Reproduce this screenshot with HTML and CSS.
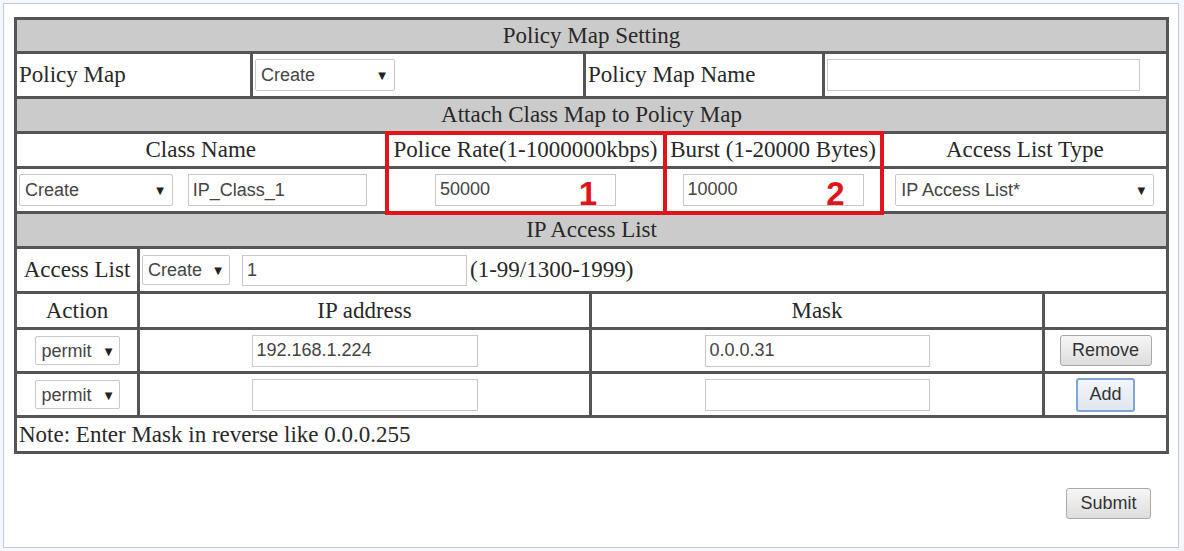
FILE: index.html
```html
<!DOCTYPE html>
<html lang="en">
<head>
<meta charset="utf-8">
<title>Policy Map Setting</title>
<link rel="stylesheet" href="styles.css">
</head>
<body>
<div class="frame">
  <table class="policy">
    <colgroup>
      <col class="c1"><col class="c2"><col class="c3"><col class="c4"><col class="c5">
      <col class="c6"><col class="c7"><col class="c8"><col class="c9"><col class="c10">
    </colgroup>
    <tr class="band band-first"><td colspan="10">Policy Map Setting</td></tr>
    <tr class="inrow">
      <td colspan="2" class="lbl">Policy Map</td>
      <td colspan="2" class="pad7"><span class="sel sel-pm"><select><option>Create</option></select></span></td>
      <td colspan="3" class="lbl">Policy Map Name</td>
      <td colspan="3" class="pad7"><input class="txt in-pmname" type="text"></td>
    </tr>
    <tr class="band"><td colspan="10">Attach Class Map to Policy Map</td></tr>
    <tr class="head head-a">
      <td colspan="3">Class Name</td>
      <td colspan="3" class="mark mark-top">Police Rate(1-1000000kbps)</td>
      <td colspan="2" class="mark mark-top">Burst (1-20000 Bytes)</td>
      <td colspan="2">Access List Type</td>
    </tr>
    <tr class="inrow">
      <td colspan="3" class="classcell">
        <span class="sel sel-class"><select><option>Create</option></select></span>
        <input class="txt in-class" type="text" value="IP_Class_1">
      </td>
      <td colspan="3" class="mark mark-bot ctr">
        <span class="numwrap"><input class="txt in-rate" type="text" value="50000"><span class="num">1</span></span>
      </td>
      <td colspan="2" class="mark mark-bot ctr">
        <span class="numwrap"><input class="txt in-burst" type="text" value="10000"><span class="num">2</span></span>
      </td>
      <td colspan="2" class="ctr">
        <span class="sel sel-type"><select><option>IP Access List*</option></select></span>
      </td>
    </tr>
    <tr class="band"><td colspan="10">IP Access List</td></tr>
    <tr class="inrow">
      <td class="ctr">Access List</td>
      <td colspan="9" class="aclcell">
        <span class="acl">
          <span class="sel sel-acl"><select><option>Create</option></select></span>
          <input class="txt in-acl" type="text" value="1">
          <span class="range">(1-99/1300-1999)</span>
        </span>
      </td>
    </tr>
    <tr class="head">
      <td>Action</td>
      <td colspan="4">IP address</td>
      <td colspan="4">Mask</td>
      <td></td>
    </tr>
    <tr class="inrow rule">
      <td class="ctr"><span class="sel sel-act"><select><option>permit</option></select></span></td>
      <td colspan="4" class="ctr"><input class="txt in-ip" type="text" value="192.168.1.224"></td>
      <td colspan="4" class="ctr"><input class="txt in-mask" type="text" value="0.0.0.31"></td>
      <td class="ctr"><button class="btn btn-remove" type="button">Remove</button></td>
    </tr>
    <tr class="inrow rule">
      <td class="ctr"><span class="sel sel-act"><select><option>permit</option></select></span></td>
      <td colspan="4" class="ctr"><input class="txt in-ip" type="text"></td>
      <td colspan="4" class="ctr"><input class="txt in-mask" type="text"></td>
      <td class="ctr"><button class="btn btn-focus" type="button">Add</button></td>
    </tr>
    <tr class="note"><td colspan="10" class="lbl">Note: Enter Mask in reverse like 0.0.0.255</td></tr>
  </table>
  <div class="actions">
    <button class="btn btn-submit" type="button">Submit</button>
  </div>
</div>
</body>
</html>
```

FILE: styles.css
```css
* { box-sizing: border-box; }

html, body {
  margin: 0;
  background: #f5f7fa;
}

body {
  font-family: "Liberation Serif", "Times New Roman", serif;
  color: #282828;
}

.frame {
  margin: 3px 5px 0 3px;
  height: 545px;
  border: 1px solid #bccbd9;
  background: #ffffff;
  padding: 13px 12px 0 10px;
}

.policy {
  width: 1152px;
  table-layout: fixed;
  border-collapse: collapse;
  font-size: 23px;
}

.c1 { width: 123px; }
.c2 { width: 113px; }
.c3 { width: 135px; }
.c4 { width: 198px; }
.c5 { width: 6px; }
.c6 { width: 74px; }
.c7 { width: 159px; }
.c8 { width: 58px; }
.c9 { width: 162px; }
.c10 { width: 124px; }

.policy td {
  border: 3px solid #555555;
  padding: 0 2px;
  vertical-align: middle;
  white-space: nowrap;
  overflow: visible;
}

.band td {
  background: #cbcbcb;
  text-align: center;
  height: 35px;
}
.band-first td { height: 34px; }

.head td {
  text-align: center;
  height: 36px;
}
.head-a td { height: 35px; }

.inrow td { height: 45px; }
.rule td { height: 44px; }
.note td { height: 36px; }

.lbl { text-align: left; }
.ctr { text-align: center; }
.pad7 { padding-left: 6px; }

/* annotation box */
.policy td.mark { border-color: #e0141a; border-width: 4px; }
.policy td.mark-top { border-bottom: 3px solid #555555; }
.policy td.mark-bot { border-top: 3px solid #555555; }

/* form controls */
.txt {
  height: 32px;
  border: 1px solid #c8c8c8;
  background: #fff;
  font: 18px "Liberation Sans", Arial, sans-serif;
  color: #444;
  padding: 0 4px;
  vertical-align: middle;
  margin: 0;
}

.sel {
  position: relative;
  display: inline-block;
  vertical-align: middle;
}

.sel select {
  appearance: none;
  -webkit-appearance: none;
  display: block;
  height: 32px;
  width: 100%;
  border: 1px solid #c8c8c8;
  border-radius: 2px;
  background: #fff;
  font: 18px "Liberation Sans", Arial, sans-serif;
  color: #444;
  padding: 0 20px 0 5px;
  margin: 0;
}

.sel::after {
  content: "\25BC";
  position: absolute;
  right: 9px;
  top: 50%;
  transform: translateY(-50%);
  font: 10px "DejaVu Sans", sans-serif;
  color: #222;
  pointer-events: none;
}

.sel-pm { width: 140px; }
.in-pmname { width: 313px; }

.classcell { padding-left: 10px; }
.sel-class { width: 154px; margin-right: 9px; }
.in-class { width: 179px; }

.numwrap { position: relative; display: inline-block; vertical-align: middle; }
.in-rate, .in-burst { width: 181px; }
.num {
  position: absolute;
  right: 19px;
  top: 1px;
  font: bold 33px/38px "Liberation Sans", Arial, sans-serif;
  color: #e0141a;
}

.sel-type { width: 259px; }

.aclcell { padding-left: 8px; text-align: left; }
.acl { display: inline-flex; align-items: center; gap: 12px; }
.sel-acl { width: 88px; }
.sel-acl select { height: 30px; }
.sel-acl::after { right: 8px; }
.in-acl { width: 225px; height: 31px; }
.range { margin-left: -9px; }

.sel-act { width: 85px; }
.sel-act select { height: 29px; padding-left: 6px; }
.sel-act::after { right: 7px; }
.in-ip { width: 226px; }
.in-mask { width: 225px; }

.btn {
  font: 18px "Liberation Sans", Arial, sans-serif;
  color: #333;
  background: linear-gradient(#f6f6f6, #dddddd);
  border: 1px solid #a9a9a9;
  border-radius: 3px;
  height: 31px;
  padding: 0 8px;
  margin: 0;
  vertical-align: middle;
}

.btn-remove { width: 92px; padding: 0; }

.btn-focus {
  border: 2px solid #7ea6d6;
  background: linear-gradient(#f3f6fb, #dfe6ef);
  height: 34px;
  width: 59px;
  padding: 0;
}

.actions {
  display: flex;
  justify-content: flex-end;
  padding-right: 15px;
  margin-top: 34px;
}

.btn-submit { height: 31px; width: 85px; padding: 0; }
```
